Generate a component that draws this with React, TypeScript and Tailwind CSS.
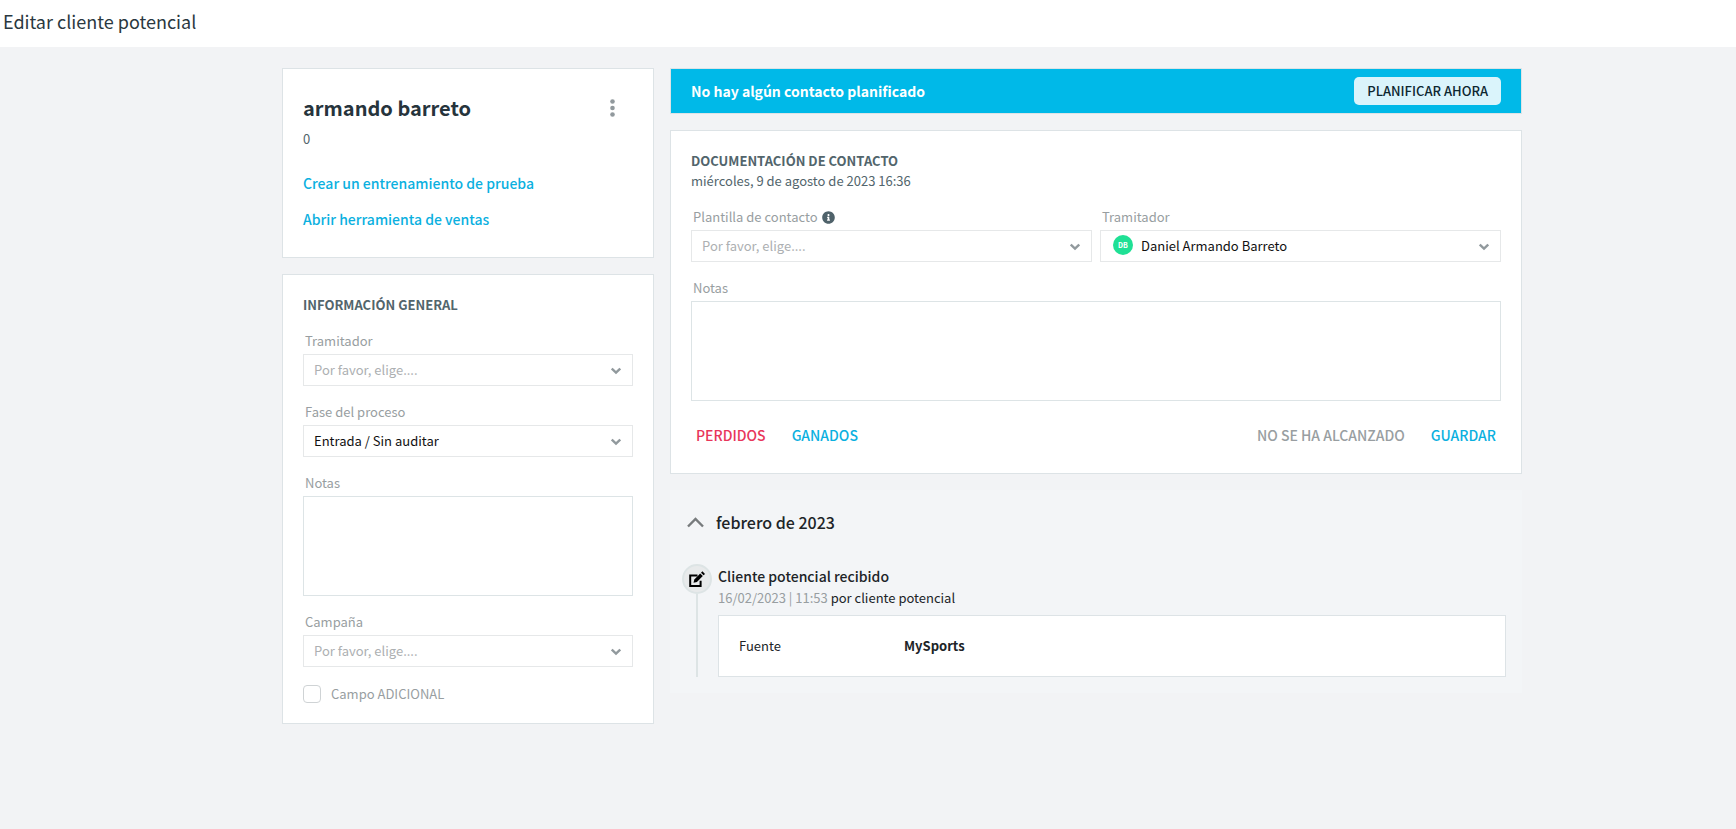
import { useState, type ReactNode } from 'react';
import { FaInfoCircle } from 'react-icons/fa';

// --- INTERFACES ---
interface FieldProps {
  id: string;
  label: string;
  info?: boolean;
  children: ReactNode;
}

interface SelectBoxProps {
  id: string;
  value: string;
  options: string[];
  initials?: string;
  onChange: (value: string) => void;
}

const PLACEHOLDER = 'Por favor, elige....';

// --- COMPONENTS ---
function Field({ id, label, info = false, children }: FieldProps) {
  return (
    <div>
      <div className="mb-[3px] flex h-5 items-center gap-1 pl-0.5">
        <label htmlFor={id} className="text-[13px] leading-5 text-[#989ea1]">{label}</label>
        {info && <FaInfoCircle size={13} className="text-[#4f626a]" />}
      </div>
      {children}
    </div>
  );
}

function SelectBox({ id, value, options, initials, onChange }: SelectBoxProps) {
  return (
    <div className="relative">
      <select
        id={id}
        value={value}
        onChange={e => onChange(e.target.value)}
        className={`block h-8 w-full appearance-none border border-[#e6e8e9] bg-white pr-10 text-[13px] leading-5 outline-none ${initials ? 'pl-10' : 'pl-2.5'} ${value ? 'text-[#111111]' : 'text-[#adb0b2]'}`}
      >
        <option value="">{PLACEHOLDER}</option>
        {options.map(o => <option key={o} value={o}>{o}</option>)}
      </select>
      {initials && (
        <span className="pointer-events-none absolute left-[13px] top-[5px] flex size-5 items-center justify-center rounded-full bg-[#1fe095] text-[7px] font-bold leading-none text-white">
          {initials}
        </span>
      )}
      <svg className="pointer-events-none absolute right-3 top-3 h-2.5 w-2.5" viewBox="0 0 10 10" fill="none" stroke="#91999d" strokeWidth="2.4">
        <path d="M0.8 2.5 5 6.5 9.2 2.5" />
      </svg>
    </div>
  );
}

function NotesBox({ id }: { id: string }) {
  return (
    <textarea id={id} className="block h-[100px] w-full resize-none border border-[#dde4e6] bg-white p-2 text-[13px] leading-5 outline-none" />
  );
}

export default function App() {
  const [tramitador, setTramitador] = useState('');
  const [fase, setFase] = useState('Entrada / Sin auditar');
  const [campana, setCampana] = useState('');
  const [plantilla, setPlantilla] = useState('');
  const [contactoTramitador, setContactoTramitador] = useState('Daniel Armando Barreto');
  const [adicional, setAdicional] = useState(false);
  const [open, setOpen] = useState(true);

  return (
    <div className="min-h-screen bg-[#f2f3f5] font-['Noto_Sans_CJK_SC','Source_Sans_Pro',sans-serif] text-[#202427]">
      <header className="bg-white px-[3px] pb-3 pt-[7px]">
        <h1 className="text-lg leading-7 text-[#2a3840]">Editar cliente potencial</h1>
      </header>

      <div className="pl-[68px]">
        <main className="mx-auto flex max-w-[1240px] items-start gap-4 pb-8 pt-[21px]">

          {/* Columna izquierda */}
          <div className="flex w-[30%] shrink-0 flex-col gap-4">
            <section className="border border-[#dde3e6] bg-white px-5 pb-[26px] pt-5">
              <div className="flex items-center justify-between pr-[13px]">
                <h2 className="text-xl font-bold leading-[38px] text-[#26343c]">armando barreto</h2>
                <button type="button" aria-label="Más opciones" className="p-1">
                  <svg className="h-5 w-[7px]" viewBox="0 0 7 20" fill="#91999d">
                    <circle cx="3.5" cy="3.5" r="2.3" />
                    <circle cx="3.5" cy="10" r="2.3" />
                    <circle cx="3.5" cy="16.5" r="2.3" />
                  </svg>
                </button>
              </div>
              <p className="mt-0.5 text-[13px] leading-5 text-[#52656c]">0</p>
              <div className="mt-[22px] flex flex-col items-start gap-3">
                <a href="#" className="text-sm font-medium leading-6 text-[#0bb0df]">Crear un entrenamiento de prueba</a>
                <a href="#" className="text-sm font-medium leading-6 text-[#0bb0df]">Abrir herramienta de ventas</a>
              </div>
            </section>

            <section className="border border-[#dde3e6] bg-white p-5">
              <h3 className="text-[13px] font-bold leading-5 text-[#52656c]">INFORMACIÓN GENERAL</h3>
              <div className="mt-4 flex flex-col gap-4">
                <Field id="tramitador" label="Tramitador">
                  <SelectBox id="tramitador" value={tramitador} options={['Daniel Armando Barreto']} onChange={setTramitador} />
                </Field>
                <Field id="fase" label="Fase del proceso">
                  <SelectBox id="fase" value={fase} options={['Entrada / Sin auditar']} onChange={setFase} />
                </Field>
                <Field id="notas" label="Notas">
                  <NotesBox id="notas" />
                </Field>
                <Field id="campana" label="Campaña">
                  <SelectBox id="campana" value={campana} options={[]} onChange={setCampana} />
                </Field>
              </div>
              <label className="mt-[18px] flex items-center gap-2.5 text-[13px] leading-[18px] text-[#989ea1]">
                <input
                  type="checkbox"
                  checked={adicional}
                  onChange={e => setAdicional(e.target.checked)}
                  className="size-[18px] appearance-none rounded border border-[#cfd3d5] bg-white checked:bg-[#00b9e8]"
                />
                Campo ADICIONAL
              </label>
            </section>
          </div>

          {/* Columna derecha */}
          <div className="flex min-w-0 flex-1 flex-col gap-4">
            <section className="flex items-center justify-between border border-[#dde3e6] bg-[#00b9e8] px-5 py-2">
              <p className="text-sm font-bold leading-7 text-white">No hay algún contacto planificado</p>
              <button type="button" className="h-7 rounded-[5px] bg-[#daf4fb] px-[13px] text-[13px] font-medium leading-5 text-[#0d2730]">
                PLANIFICAR AHORA
              </button>
            </section>

            <section className="border border-[#dde3e6] bg-white px-5 pb-[22px] pt-5">
              <h3 className="text-[13px] font-bold leading-5 text-[#52656c]">DOCUMENTACIÓN DE CONTACTO</h3>
              <p className="text-[13px] leading-5 text-[#52656c]">miércoles, 9 de agosto de 2023 16:36</p>
              <div className="mt-4 grid grid-cols-2 gap-2">
                <Field id="plantilla" label="Plantilla de contacto" info>
                  <SelectBox id="plantilla" value={plantilla} options={[]} onChange={setPlantilla} />
                </Field>
                <Field id="contacto-tramitador" label="Tramitador">
                  <SelectBox
                    id="contacto-tramitador"
                    value={contactoTramitador}
                    options={['Daniel Armando Barreto']}
                    initials={contactoTramitador ? 'DB' : undefined}
                    onChange={setContactoTramitador}
                  />
                </Field>
              </div>
              <div className="mt-4">
                <Field id="contacto-notas" label="Notas">
                  <NotesBox id="contacto-notas" />
                </Field>
              </div>
              <div className="mt-[18px] flex justify-between text-sm font-medium leading-8">
                <div className="flex gap-4">
                  <button type="button" className="px-[5px] text-[#e8365a]">PERDIDOS</button>
                  <button type="button" className="px-[5px] text-[#0bb0df]">GANADOS</button>
                </div>
                <div className="flex gap-4">
                  <button type="button" className="px-[5px] text-[#989ea1]">NO SE HA ALCANZADO</button>
                  <button type="button" className="px-[5px] text-[#0bb0df]">GUARDAR</button>
                </div>
              </div>
            </section>

            {/* Historial */}
            <section className="bg-[#f3f5f7] pb-4 pl-3 pr-4 pt-[18px]">
              <button type="button" onClick={() => setOpen(!open)} className="flex items-center gap-3 pl-[5px] text-base font-medium leading-7">
                <svg className={`h-4 w-[17px] ${open ? '' : 'rotate-180'}`} viewBox="0 0 17 16" fill="none" stroke="#777b7d" strokeWidth="2.4">
                  <path d="M1 12.5 8.5 5 16 12.5" />
                </svg>
                febrero de 2023
              </button>
              {open && (
                <div className="mt-7 flex gap-1.5">
                  <div className="flex flex-col items-center">
                    <span className="flex size-[30px] items-center justify-center rounded-full border-2 border-[#dde4e5] bg-[#e8eaeb]">
                      <svg className="size-4" viewBox="0 0 16 16">
                        <path d="M8.5 4.5H1.2V15h10.4V9.8" fill="none" stroke="#000" strokeWidth="2" />
                        <path d="M4.5 11.8 5.3 8.4 11.2 2.5 13.8 5.1 7.9 11z" fill="#000" />
                        <path d="M12 1.7 13.4.3 16 2.9 14.6 4.3z" fill="#000" />
                      </svg>
                    </span>
                    <span className="w-0.5 flex-1 bg-[#dde4e5]" />
                  </div>
                  <div className="min-w-0 flex-1">
                    <h4 className="text-sm font-medium leading-6">Cliente potencial recibido</h4>
                    <p className="text-[13px] leading-5">
                      <span className="text-[#989ea1]">16/02/2023 | 11:53</span> por cliente potencial
                    </p>
                    <dl className="mt-[7px] flex border border-[#dde3e6] bg-white p-5 text-[13px] leading-5">
                      <dt className="w-[165px]">Fuente</dt>
                      <dd className="font-bold">MySports</dd>
                    </dl>
                  </div>
                </div>
              )}
            </section>
          </div>
        </main>
      </div>
    </div>
  );
}
